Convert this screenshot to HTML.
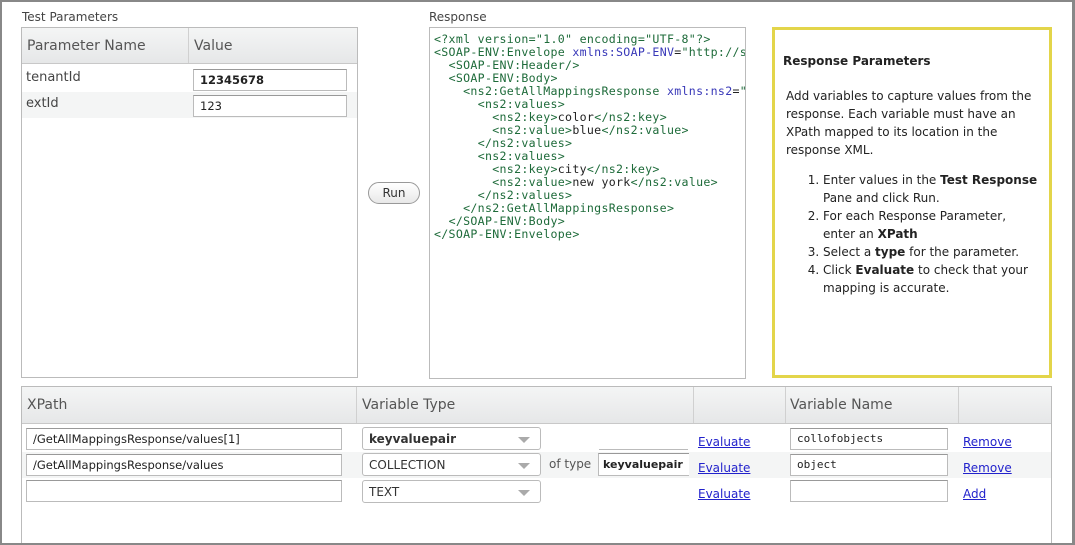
<!DOCTYPE html>
<html><head><meta charset="utf-8"><style>
*{box-sizing:border-box;margin:0;padding:0}
html,body{width:1075px;height:545px;overflow:hidden}
body{background:#fff;font-family:"DejaVu Sans","Liberation Sans",sans-serif;color:#333;position:relative}
.frame{position:absolute;left:0;top:0;width:1075px;height:545px;border:2px solid #888;border-right-width:3px;z-index:10}
.abs{position:absolute}
.lbl{font-size:12px;color:#444}
.hdr{background:linear-gradient(#f4f5f5,#e6e7e8);border-bottom:1px solid #c8c8c8;font-size:14px;color:#555}
.inp{position:absolute;border:1px solid #bbb;border-top-color:#999;background:#fff;font-size:11.5px;padding:3px 6px;color:#222;overflow:hidden;white-space:nowrap}
.sel{position:absolute;border:1px solid #bbb;border-radius:3px;background:#fff;font-size:12px;padding:4px 6px;color:#333}
.sel:after{content:"";position:absolute;right:10px;top:9px;border-left:6px solid transparent;border-right:6px solid transparent;border-top:6px solid #aaa}
a{position:absolute;color:#2222cc;text-decoration:underline;font-size:12px}
pre{font-family:"DejaVu Sans Mono","Liberation Mono",monospace;font-size:11.6px;line-height:13px;color:#222;letter-spacing:0.3px}
.t{color:#1e6b3a}.a{color:#3838b8}.s{color:#1e6b3a}
</style></head><body>
<div class="frame"></div>

<div class="abs lbl" style="left:22px;top:10px">Test Parameters</div>
<div class="abs" style="left:21px;top:27px;width:337px;height:351px;border:1px solid #bbb">
  <div class="hdr" style="height:36px;position:relative">
    <span class="abs" style="left:5px;top:10px">Parameter Name</span>
    <div class="abs" style="left:166px;top:0;width:1px;height:35px;background:#d0d0d0"></div>
    <span class="abs" style="left:172px;top:10px">Value</span>
  </div>
  <div class="abs" style="left:0;top:64px;width:335px;height:26px;background:#f4f5f5"></div>
  <div class="abs" style="left:4px;top:42px;font-size:13px;color:#444">tenantId</div>
  <div class="abs" style="left:4px;top:68px;font-size:13px;color:#444">extId</div>
  <div class="inp" style="left:171px;top:41px;width:154px;height:22px;font-weight:bold">12345678</div>
  <div class="inp" style="left:171px;top:67px;width:154px;height:22px">123</div>
</div>

<div class="abs" style="left:368px;top:182px;width:52px;height:22px;border:1px solid #999;border-radius:11px;background:linear-gradient(#fff,#e8e8e8);font-size:12px;text-align:center;line-height:20px;color:#333">Run</div>

<div class="abs lbl" style="left:429px;top:10px">Response</div>
<div class="abs" style="left:429px;top:27px;width:317px;height:352px;border:1px solid #bbb;overflow:hidden;padding:5px 0 0 4px">
<pre><span class="t">&lt;?xml version="1.0" encoding="UTF-8"?&gt;</span>
<span class="t">&lt;SOAP-ENV:Envelope</span> <span class="a">xmlns:SOAP-ENV</span>=<span class="s">"http://schemas.xmlsoap.org/soap/envelope/"&gt;</span>
  <span class="t">&lt;SOAP-ENV:Header/&gt;</span>
  <span class="t">&lt;SOAP-ENV:Body&gt;</span>
    <span class="t">&lt;ns2:GetAllMappingsResponse</span> <span class="a">xmlns:ns2</span>=<span class="s">"http://x"&gt;</span>
      <span class="t">&lt;ns2:values&gt;</span>
        <span class="t">&lt;ns2:key&gt;</span>color<span class="t">&lt;/ns2:key&gt;</span>
        <span class="t">&lt;ns2:value&gt;</span>blue<span class="t">&lt;/ns2:value&gt;</span>
      <span class="t">&lt;/ns2:values&gt;</span>
      <span class="t">&lt;ns2:values&gt;</span>
        <span class="t">&lt;ns2:key&gt;</span>city<span class="t">&lt;/ns2:key&gt;</span>
        <span class="t">&lt;ns2:value&gt;</span>new york<span class="t">&lt;/ns2:value&gt;</span>
      <span class="t">&lt;/ns2:values&gt;</span>
    <span class="t">&lt;/ns2:GetAllMappingsResponse&gt;</span>
  <span class="t">&lt;/SOAP-ENV:Body&gt;</span>
<span class="t">&lt;/SOAP-ENV:Envelope&gt;</span></pre>
</div>

<div class="abs" style="left:772px;top:27px;width:280px;height:351px;border:3px solid #e3d54a;padding:22px 10px 0 8px;font-size:12px;line-height:18px;color:#222">
  <div style="font-weight:bold;margin-bottom:17px">Response Parameters</div>
  <div style="padding-left:3px">Add variables to capture values from the response. Each variable must have an XPath mapped to its location in the response XML.</div>
  <ol style="margin:12px 0 0 40px">
    <li>Enter values in the <b>Test Response</b> Pane and click Run.</li>
    <li>For each Response Parameter, enter an <b>XPath</b></li>
    <li>Select a <b>type</b> for the parameter.</li>
    <li>Click <b>Evaluate</b> to check that your mapping is accurate.</li>
  </ol>
</div>

<div class="abs" style="left:21px;top:386px;width:1031px;height:159px;border:1px solid #bbb;border-bottom:none">
  <div class="hdr" style="height:37px;position:relative">
    <span class="abs" style="left:5px;top:10px">XPath</span>
    <div class="abs" style="left:334px;top:0;width:1px;height:36px;background:#d0d0d0"></div>
    <span class="abs" style="left:340px;top:10px">Variable Type</span>
    <div class="abs" style="left:671px;top:0;width:1px;height:36px;background:#d0d0d0"></div>
    <div class="abs" style="left:763px;top:0;width:1px;height:36px;background:#d0d0d0"></div>
    <span class="abs" style="left:768px;top:10px">Variable Name</span>
    <div class="abs" style="left:936px;top:0;width:1px;height:36px;background:#d0d0d0"></div>
  </div>
  <div class="abs" style="left:0;top:65px;width:1029px;height:26px;background:#f4f5f5"></div>
</div>

<div class="inp" style="left:26px;top:428px;width:316px;height:22px">/GetAllMappingsResponse/values[1]</div>
<div class="inp" style="left:26px;top:454px;width:316px;height:22px">/GetAllMappingsResponse/values</div>
<div class="inp" style="left:26px;top:480px;width:316px;height:22px"></div>

<div class="sel" style="left:362px;top:427px;width:179px;height:23px;font-weight:bold">keyvaluepair</div>
<div class="sel" style="left:362px;top:453px;width:179px;height:23px">COLLECTION</div>
<div class="sel" style="left:362px;top:480px;width:179px;height:23px">TEXT</div>

<div class="abs" style="left:599px;top:449px;width:89px;height:1px;background:#bbb"></div>
<div class="abs" style="left:549px;top:457px;font-size:12px;color:#555">of type</div>
<div class="inp" style="left:598px;top:453px;width:91px;height:23px;font-weight:bold;border-right:none;font-size:11px;padding:4px 4px">keyvaluepair</div>

<a style="left:698px;top:435px">Evaluate</a>
<a style="left:698px;top:461px">Evaluate</a>
<a style="left:698px;top:487px">Evaluate</a>

<div class="inp" style="left:790px;top:428px;width:158px;height:22px;font-family:'DejaVu Sans Mono',monospace;font-size:11px">collofobjects</div>
<div class="inp" style="left:790px;top:454px;width:158px;height:22px;font-family:'DejaVu Sans Mono',monospace;font-size:11px">object</div>
<div class="inp" style="left:790px;top:480px;width:158px;height:22px"></div>

<a style="left:963px;top:435px">Remove</a>
<a style="left:963px;top:461px">Remove</a>
<a style="left:963px;top:487px">Add</a>
</body></html>
